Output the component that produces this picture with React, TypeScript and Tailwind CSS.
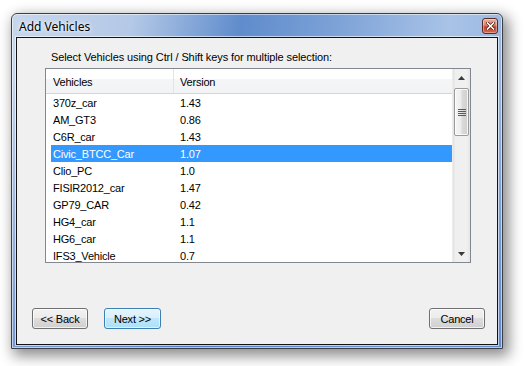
import React from "react";

const rows: [string, string][] = [
  ["370z_car", "1.43"],
  ["AM_GT3", "0.86"],
  ["C6R_car", "1.43"],
  ["Civic_BTCC_Car", "1.07"],
  ["Clio_PC", "1.0"],
  ["FISIR2012_car", "1.47"],
  ["GP79_CAR", "0.42"],
  ["HG4_car", "1.1"],
  ["HG6_car", "1.1"],
  ["IFS3_Vehicle", "0.7"],
];

function Btn({ label, def }: { label: string; def?: boolean }) {
  return (
    <div
      className={
        def
          ? "w-[57px] h-[21px] pt-[2px] rounded-[3px] border border-[#3c7fb1] bg-[linear-gradient(180deg,#e5f5fd_0%,#d6effc_50%,#bfe6fb_50%,#ace0fa_100%)] shadow-[inset_0_0_0_1px_rgba(255,255,255,0.6)] flex items-center justify-center text-[11px] text-black tracking-[-0.2px]"
          : "w-[56px] h-[21px] pt-[2px] rounded-[3px] border border-[#707070] bg-[linear-gradient(180deg,#f2f2f2_0%,#ebebeb_50%,#dddddd_50%,#cfcfcf_100%)] shadow-[inset_0_0_0_1px_rgba(255,255,255,0.7)] flex items-center justify-center text-[11px] text-black tracking-[-0.2px]"
      }
    >
      {label}
    </div>
  );
}

function Scrollbar() {
  return (
    <div className="w-[18px] h-full flex flex-col bg-[linear-gradient(90deg,#e2e2e2_0%,#efefef_15%,#f0f0f0_80%,#e6e6e6_100%)] border-l border-[#ececec]">
      <div className="h-[17px] flex items-center justify-center">
        <svg width="7" height="4" viewBox="0 0 7 4">
          <path d="M3.5 0 L7 4 L0 4 Z" fill="#3a3a3a" />
        </svg>
      </div>
      <div className="mt-[2px] mx-auto w-[15px] h-[48px] rounded-[2px] border border-[#9b9b9b] bg-[linear-gradient(90deg,#f6f6f6_0%,#ececec_45%,#dadada_55%,#cfcfcf_100%)] shadow-[inset_0_0_0_1px_rgba(255,255,255,0.8)] flex flex-col items-center justify-center gap-[1px]">
        <div className="w-[8px] h-[1px] bg-[#5a5a5a]" />
        <div className="w-[8px] h-[1px] bg-[#5a5a5a]" />
        <div className="w-[8px] h-[1px] bg-[#5a5a5a]" />
        <div className="w-[8px] h-[1px] bg-[#5a5a5a]" />
      </div>
      <div className="flex-1" />
      <div className="h-[17px] flex items-center justify-center">
        <svg width="7" height="4" viewBox="0 0 7 4">
          <path d="M0 0 L7 0 L3.5 4 Z" fill="#3a3a3a" />
        </svg>
      </div>
    </div>
  );
}

export default function App() {
  return (
    <div
      className="w-[527px] h-[366px] bg-white overflow-hidden pt-[13px] pl-[11px]"
      style={{ fontFamily: '"Liberation Sans", Arial, sans-serif' }}
    >
      <div className="w-[492px] h-[336px] rounded-t-[6px] border border-[#3b3f45] flex flex-col px-[4px] pb-[3px] bg-[image:linear-gradient(180deg,rgba(255,255,255,0)_20%,rgba(70,115,190,0.6)_100%),linear-gradient(100deg,#c6d6ed_0%,#b4c9e7_22%,#5f8ccc_42%,#7aa0d6_58%,#a9c3e7_80%,#8eaedc_100%)] shadow-[inset_0_0_0_1px_rgba(255,255,255,0.55),4px_5px_14px_2px_rgba(0,0,0,0.45)]">
        {/* title bar */}
        <div className="h-[23px] flex items-center justify-between">
          <div
            className="ml-[3px] text-[12px] text-black leading-none mt-[2px] [text-shadow:0_0_6px_#ffffff,0_0_3px_#ffffff]"
            style={{ fontFamily: '"Noto Sans", "Open Sans", sans-serif' }}
          >
            Add Vehicles
          </div>
          <div className="mt-[1px] w-[16px] h-[16px] rounded-[3px] border border-[#5b2a22] bg-[linear-gradient(180deg,#eab2a3_0%,#d9826a_45%,#c4442a_55%,#d7684b_100%)] shadow-[inset_0_0_0_1px_rgba(255,255,255,0.35)] flex items-center justify-center">
            <svg width="9" height="8" viewBox="0 0 9 8">
              <path d="M1.5 1 L7.5 7 M7.5 1 L1.5 7" stroke="#4a1a10" strokeWidth="3" strokeLinecap="square" />
              <path d="M1.5 1 L7.5 7 M7.5 1 L1.5 7" stroke="#ffffff" strokeWidth="1.6" strokeLinecap="square" />
            </svg>
          </div>
        </div>
        {/* client */}
        <div className="flex-1 border border-[#141414] bg-[#f0f0f0] shadow-[0_0_0_1px_rgba(255,255,255,0.6)] flex flex-col">
          <div className="mt-[13px] ml-[34px] h-[13px] leading-[13px] text-[11px] text-black tracking-[-0.1px]">
            Select Vehicles using Ctrl / Shift keys for multiple selection:
          </div>
          <div className="mt-[4px] ml-[28px] w-[426px] h-[195px] border border-[#828790] bg-white flex overflow-hidden">
            <div className="w-[406px] flex flex-col overflow-hidden">
              <div className="h-[25px] shrink-0 flex border-b border-[#d5d5d5] bg-[linear-gradient(180deg,#ffffff_0%,#ffffff_42%,#f4f5f7_42%,#f2f3f5_100%)] text-[11px] text-black tracking-[-0.2px]">
                <div className="w-[128px] pl-[7px] pt-[2px] flex items-center border-r border-[#e3e4e6]">Vehicles</div>
                <div className="flex-1 pl-[6px] pt-[2px] flex items-center">Version</div>
              </div>
              <div className="flex flex-col pl-[5px]">
                {rows.map(([n, v], i) => (
                  <div
                    key={n}
                    className={
                      i === 3
                        ? "h-[17px] shrink-0 flex items-center pl-[2px] pt-[2px] bg-[#3399ff] text-white text-[11px] tracking-[-0.2px]"
                        : "h-[17px] shrink-0 flex items-center pl-[2px] pt-[2px] text-black text-[11px] tracking-[-0.2px]"
                    }
                  >
                    <div className="w-[127px]">{n}</div>
                    <div>{v}</div>
                  </div>
                ))}
              </div>
            </div>
            <Scrollbar />
          </div>
          <div className="mt-[45px] pl-[15px] pr-[12px] flex items-center">
            <Btn label="<< Back" />
            <div className="w-[16px]" />
            <Btn label="Next >>" def />
            <div className="flex-1" />
            <Btn label="Cancel" />
          </div>
        </div>
      </div>
    </div>
  );
}
